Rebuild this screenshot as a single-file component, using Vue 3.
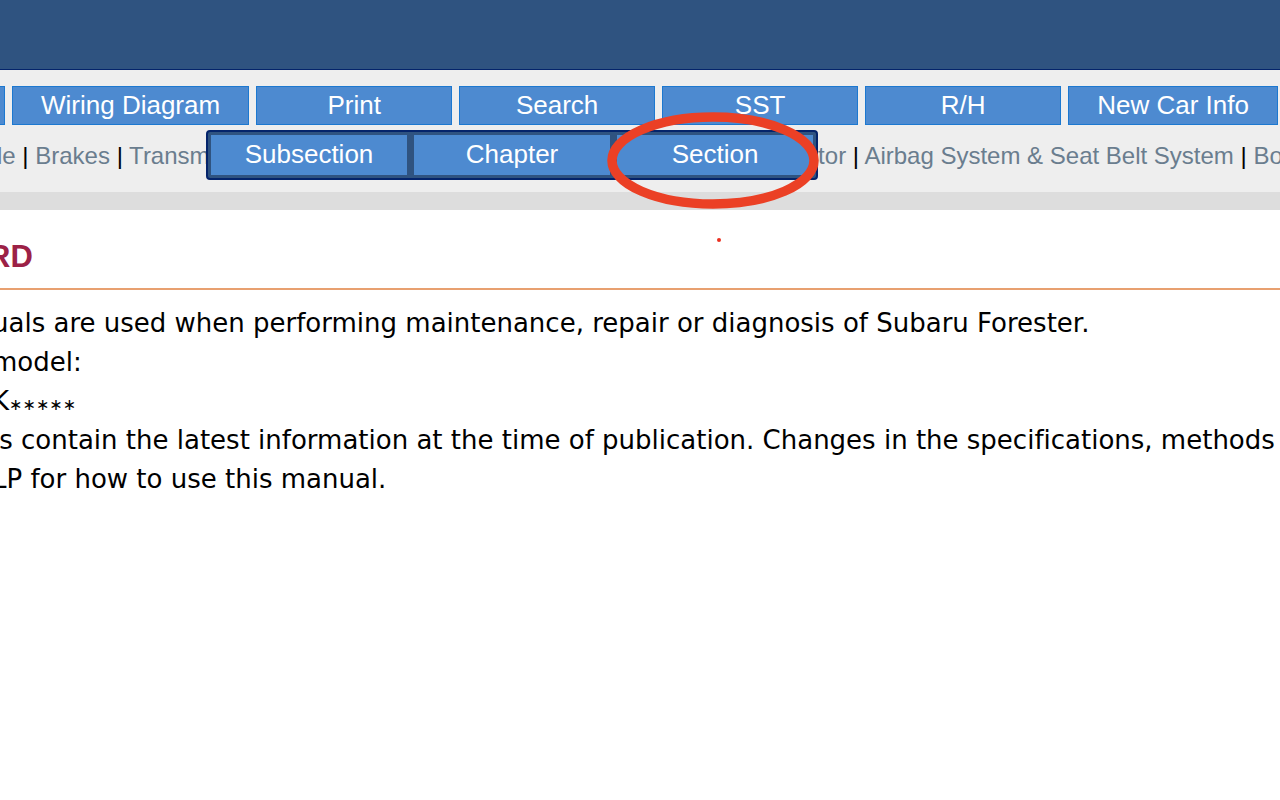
<script setup>
const tools = ['Wiring Diagram', 'Print', 'Search', 'SST', 'R/H', 'New Car Info']
const levels = ['Subsection', 'Chapter', 'Section']
const leftLinks = ['le', 'Brakes', 'Transm']
const rightLinks = ['tor', 'Airbag System & Seat Belt System', 'Body']
const lines = [
  'uals are used when performing maintenance, repair or diagnosis of Subaru Forester.',
  'model:',
  'K∗∗∗∗∗',
  'ls contain the latest information at the time of publication. Changes in the specifications, methods',
  'LP for how to use this manual.'
]
</script>

<template>
  <div class="page">
    <header class="banner"></header>
    <div class="toolbar">
      <div class="tools">
        <button class="tool edge" type="button" aria-label="Previous"></button>
        <button v-for="t in tools" :key="t" class="tool" type="button">{{ t }}</button>
      </div>
      <nav class="links">
        <div class="group left">
          <template v-for="(l, i) in leftLinks" :key="l">
            <span v-if="i"> | </span><a href="#">{{ l }}</a>
          </template>
        </div>
        <div class="group right">
          <template v-for="(l, i) in rightLinks" :key="l">
            <span v-if="i"> | </span><a href="#">{{ l }}</a>
          </template>
        </div>
      </nav>
      <div class="menu">
        <button v-for="l in levels" :key="l" class="level" type="button">{{ l }}</button>
      </div>
      <svg class="mark" width="214" height="134" viewBox="0 0 214 134" aria-hidden="true">
        <ellipse cx="107" cy="50.5" rx="101" ry="43.5" fill="none" stroke="#eb4025" stroke-width="9.5" />
        <circle cx="113" cy="130" r="2" fill="#eb3020" />
      </svg>
    </div>
    <main class="content">
      <h1>RD</h1>
      <div class="text">
        <p v-for="line in lines" :key="line">
          <template v-if="line.includes('∗')">{{ line.replaceAll('∗', '') }}<span class="stars">{{ line.replace(/[^∗]/g, '') }}</span></template>
          <template v-else>{{ line }}</template>
        </p>
      </div>
    </main>
  </div>
</template>

<style>
body {
  margin: 0;
  background: #fff;
}
</style>

<style scoped>
.page {
  overflow: hidden;
  font-family: "Liberation Sans", Arial, sans-serif;
}
.banner {
  box-sizing: border-box;
  height: 70px;
  background: #2f5380;
  border-bottom: 1px solid #04246b;
}
.toolbar {
  position: relative;
  padding-top: 16px;
  background: #eee;
  border-bottom: 18px solid #ddd;
}
.tools {
  display: flex;
  gap: 7px;
}
.tool,
.level {
  box-sizing: border-box;
  flex: none;
  height: 39px;
  margin: 0;
  font: 26px/34px "Liberation Sans", Arial, sans-serif;
  color: #fff;
  white-space: nowrap;
  background: #4d8ad0;
}
.tool {
  min-width: 196px;
  padding: 0 28px 2px;
  border: 1px solid #1c78d0;
}
.tool.edge {
  min-width: 5px;
  padding: 0;
  border-left: 0;
}
.links {
  display: flex;
  height: 67px;
  margin-left: -3px;
  font-size: 24px;
  line-height: 62px;
  white-space: nowrap;
}
.group {
  overflow: hidden;
}
.left {
  flex: 0 0 64%;
}
.right {
  flex: 1;
}
.links a {
  color: #6a7d8e;
  text-decoration: none;
}
.menu {
  position: absolute;
  top: 60px;
  left: 206px;
  display: flex;
  gap: 7px;
  padding: 3px;
  background: #2f5380;
  border: 2px solid #04246b;
  border-radius: 4px;
}
.level {
  width: 196px;
  height: 40px;
  padding: 0 0 2px;
  border: 0;
}
.mark {
  position: absolute;
  top: 40px;
  left: 606px;
  z-index: 1;
  pointer-events: none;
}
.content h1 {
  margin: 0;
  padding: 28px 0 13px;
  text-indent: -12px;
  font-size: 31px;
  line-height: 37px;
  color: #9c2146;
  border-bottom: 2px solid #e8a070;
}
.text {
  margin: 14px 0 0 -8px;
  font: 26px/39px "DejaVu Sans", Verdana, sans-serif;
  font-variant-ligatures: none;
  color: #000;
  white-space: nowrap;
}
.text p {
  margin: 0;
}
.stars {
  font-size: 16px;
  line-height: 1;
}
</style>
